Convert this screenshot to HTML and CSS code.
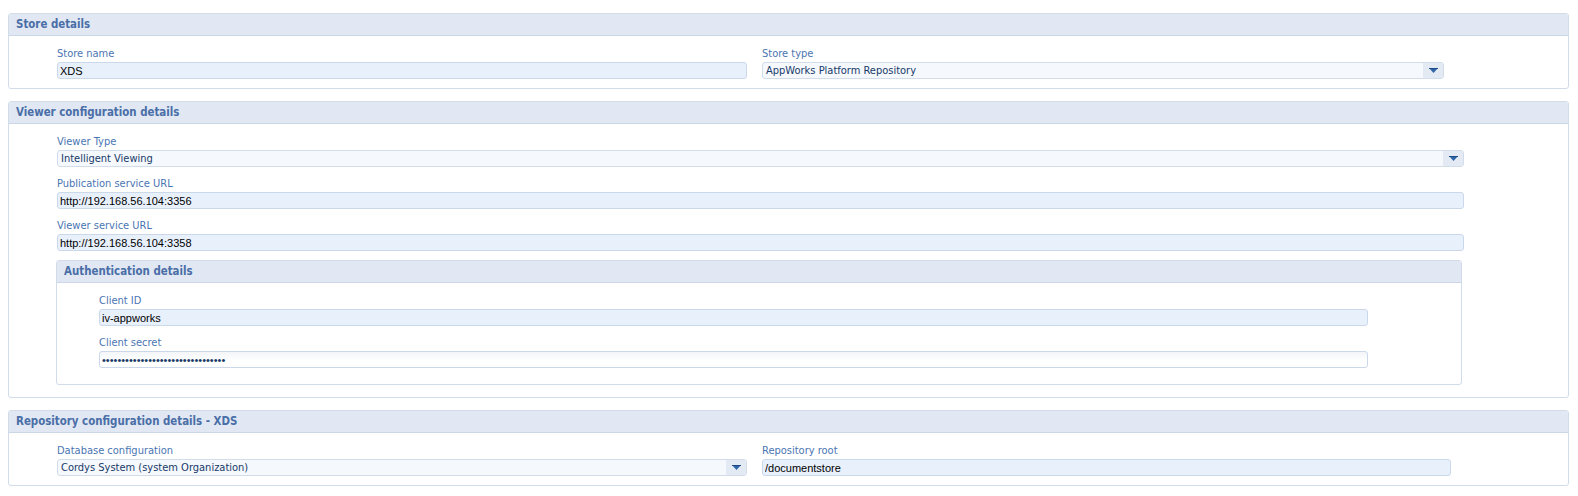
FILE: index.html
```html
<!DOCTYPE html>
<html lang="en">
<head>
	<meta charset="UTF-8">
	<title>Store details</title>
	<link rel="stylesheet" href="styles.css">
</head>
<body>
	<div class="panel">
		<div class="panel-head">Store details</div>
		<div class="panel-body cols">
			<div class="field">
				<label>Store name</label>
				<input class="text" type="text" value="XDS" readonly>
			</div>
			<div class="field">
				<label>Store type</label>
				<div class="select short">
					<span class="select-value">AppWorks Platform Repository</span>
					<span class="select-btn"><svg width="9" height="5" viewBox="0 0 9 5"><path d="M0 0H9L4.5 5Z" fill="#2f64a6"/><path d="M0 0.5H9" stroke="#1c4a86" stroke-width="1"/></svg></span>
				</div>
			</div>
		</div>
	</div>

	<div class="panel">
		<div class="panel-head">Viewer configuration details</div>
		<div class="panel-body">
			<div class="field wide">
				<label>Viewer Type</label>
				<div class="select">
					<span class="select-value">Intelligent Viewing</span>
					<span class="select-btn"><svg width="9" height="5" viewBox="0 0 9 5"><path d="M0 0H9L4.5 5Z" fill="#2f64a6"/><path d="M0 0.5H9" stroke="#1c4a86" stroke-width="1"/></svg></span>
				</div>
			</div>
			<div class="field wide">
				<label>Publication service URL</label>
				<input class="text" type="text" value="http://192.168.56.104:3356" readonly>
			</div>
			<div class="field wide">
				<label>Viewer service URL</label>
				<input class="text" type="text" value="http://192.168.56.104:3358" readonly>
			</div>
			<div class="panel sub">
				<div class="panel-head">Authentication details</div>
				<div class="panel-body inner">
					<div class="field">
						<label>Client ID</label>
						<input class="text" type="text" value="iv-appworks" readonly>
					</div>
					<div class="field">
						<label>Client secret</label>
						<input class="text secret" type="text" value="••••••••••••••••••••••••••••••••" readonly>
					</div>
				</div>
			</div>
		</div>
	</div>

	<div class="panel">
		<div class="panel-head">Repository configuration details - XDS</div>
		<div class="panel-body cols">
			<div class="field">
				<label>Database configuration</label>
				<div class="select">
					<span class="select-value">Cordys System (system Organization)</span>
					<span class="select-btn"><svg width="9" height="5" viewBox="0 0 9 5"><path d="M0 0H9L4.5 5Z" fill="#2f64a6"/><path d="M0 0.5H9" stroke="#1c4a86" stroke-width="1"/></svg></span>
				</div>
			</div>
			<div class="field">
				<label>Repository root</label>
				<input class="text" type="text" value="/documentstore" readonly>
			</div>
		</div>
	</div>
</body>
</html>
```

FILE: styles.css
```css
* {
	box-sizing:border-box;
}
body {
	margin:13px 9px 0 8px;
	font-family:Tahoma, "DejaVu Sans Condensed", sans-serif;
	font-size:11px;
	background:#fff;
}
.panel {
	border:1px solid #d2dce9;
	border-radius:3px;
	margin-bottom:12px;
}
.panel-head {
	height:22px;
	line-height:21px;
	padding-left:7px;
	background:#e1e8f3;
	border-bottom:1px solid #cbd7e7;
	border-radius:2px 2px 0 0;
	color:#4a6ea7;
	font-weight:bold;
	font-size:11.4px;
}
.panel-body {
	padding:10px 0 0 48px;
}
.panel-body.cols {
	display:grid;
	grid-template-columns:690px 689px;
	column-gap:15px;
}
.field {
	margin-bottom:9px;
}
.field label {
	display:block;
	height:14px;
	line-height:15px;
	margin-bottom:2px;
	color:#4a75b3;
}
.field.wide {
	width:1407px;
}
.text {
	display:block;
	width:100%;
	height:17px;
	margin:0;
	padding:0 2px;
	border:1px solid #cbd8ea;
	border-radius:3px;
	background:#e8f0fc;
	font-family:"Liberation Sans", Arial, sans-serif;
	font-size:11px;
	color:#000;
	outline:none;
}
.text.secret {
	background:linear-gradient(#f3f5f8, #fff 60%);
	color:#1a3a66;
}
.select {
	display:flex;
	height:17px;
	border:1px solid #d3ddea;
	border-radius:3px;
	background:#f5f8fc;
	overflow:hidden;
}
.select.short {
	width:682px;
}
.select-value {
	flex:1;
	padding-left:3px;
	line-height:15px;
	color:#173a69;
}
.select-btn {
	width:20px;
	display:flex;
	align-items:center;
	justify-content:center;
	background:#e3eaf4;
}
.panel.sub {
	width:1406px;
	margin:0 0 12px -1px;
}
.panel-body.inner {
	padding:10px 0 7px 42px;
}
.panel-body.inner .field {
	width:1269px;
}
```
